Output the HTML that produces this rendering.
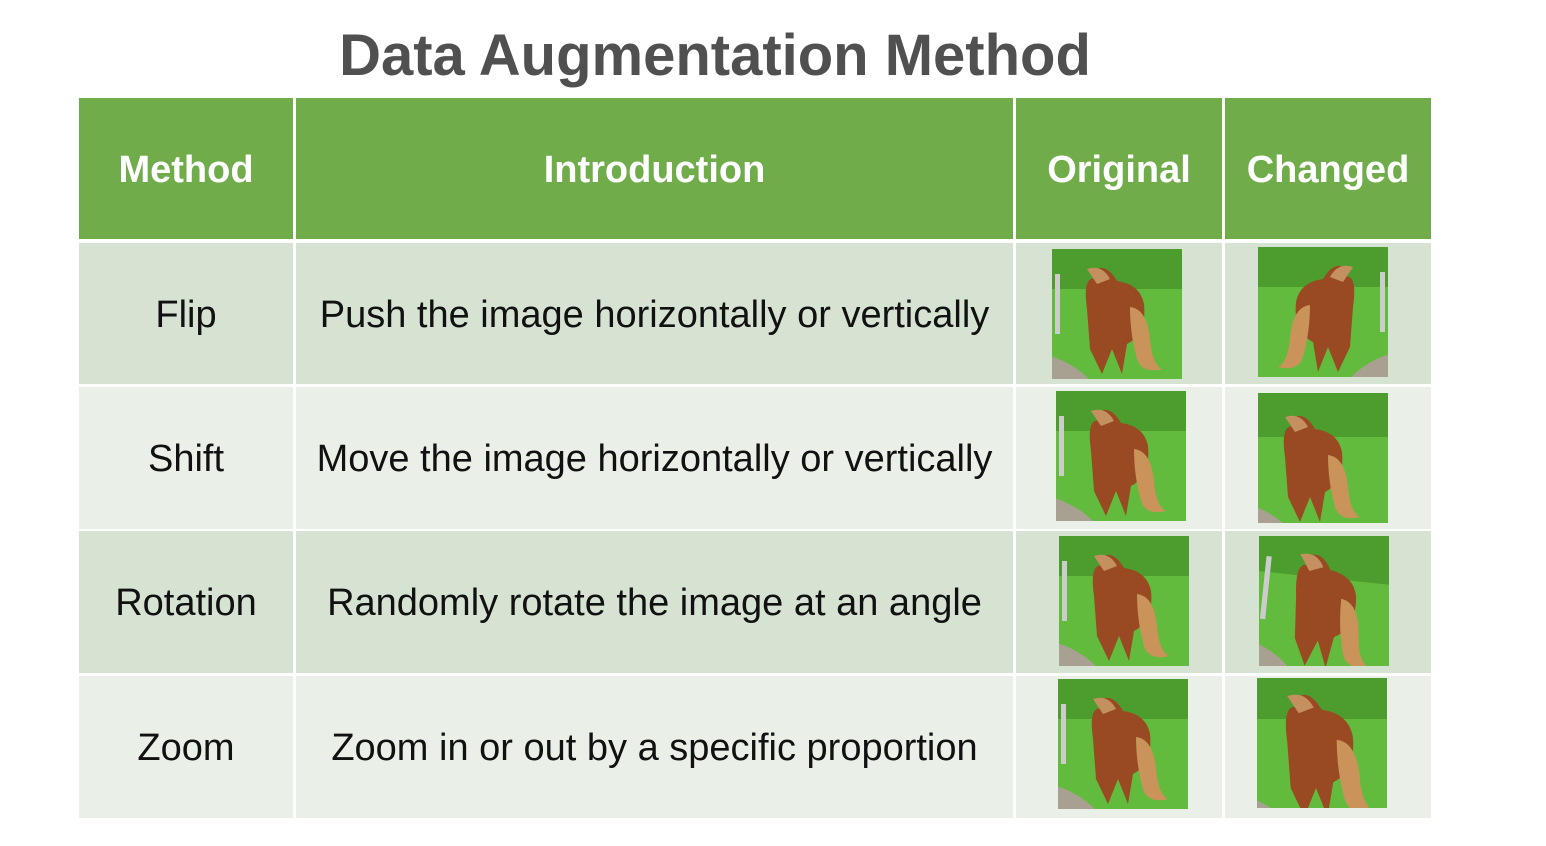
<!DOCTYPE html>
<html><head><style>
body{margin:0;width:1546px;height:846px;background:#fff;position:relative;overflow:hidden;font-family:"Liberation Sans",sans-serif}
.t{position:absolute;left:0;top:22px;width:1430px;text-align:center;font-size:58px;font-weight:bold;color:#505050}
.c{position:absolute;display:flex;align-items:center;justify-content:center;color:#111;font-size:38px;padding-top:3px;box-sizing:border-box}
.h{background:#71ac4b;color:#fff;font-weight:bold;font-size:38px;padding-top:4px}
.a{background:#d6e3d2}.b{background:#eaf0e8}
svg.i{position:absolute;width:130px;height:130px}
</style></head><body>
<svg width="0" height="0" style="position:absolute"><defs>
<g id="hz">
<rect x="-40" y="-40" width="210" height="210" fill="#62bb3c"/>
<rect x="-40" y="-40" width="210" height="80" fill="#4d9d2e"/>
<path d="M-40 100 Q40 105 60 170 L-40 170Z" fill="#a8a090"/>
<rect x="3" y="25" width="5" height="60" fill="#ccc"/>
<path d="M45 30 Q30 25 35 60 L38 100 L50 125 L60 100 L70 125 L75 95 Q95 85 92 55 Q88 35 65 32 Q55 15 45 20Z" fill="#9a4a22"/>
<path d="M78 58 Q95 60 98 90 Q100 115 110 120 Q90 125 85 110 Q78 85 78 58Z" fill="#c9935a"/>
<path d="M35 20 Q50 15 58 30 L45 35Z" fill="#c49060"/>
</g></defs></svg>
<div class="t">Data Augmentation Method</div>
<div class="c h" style="left:79px;top:98px;width:214px;height:141px">Method</div>
<div class="c h" style="left:296px;top:98px;width:717px;height:141px">Introduction</div>
<div class="c h" style="left:1016px;top:98px;width:206px;height:141px">Original</div>
<div class="c h" style="left:1225px;top:98px;width:206px;height:141px">Changed</div>

<div class="c a" style="left:79px;top:243px;width:214px;height:141px">Flip</div>
<div class="c a" style="left:296px;top:243px;width:717px;height:141px">Push the image horizontally or vertically</div>
<div class="c a" style="left:1016px;top:243px;width:206px;height:141px"></div>
<div class="c a" style="left:1225px;top:243px;width:206px;height:141px"></div>

<div class="c b" style="left:79px;top:387px;width:214px;height:142px">Shift</div>
<div class="c b" style="left:296px;top:387px;width:717px;height:142px">Move the image horizontally or vertically</div>
<div class="c b" style="left:1016px;top:387px;width:206px;height:142px"></div>
<div class="c b" style="left:1225px;top:387px;width:206px;height:142px"></div>

<div class="c a" style="left:79px;top:531px;width:214px;height:142px">Rotation</div>
<div class="c a" style="left:296px;top:531px;width:717px;height:142px">Randomly rotate the image at an angle</div>
<div class="c a" style="left:1016px;top:531px;width:206px;height:142px"></div>
<div class="c a" style="left:1225px;top:531px;width:206px;height:142px"></div>

<div class="c b" style="left:79px;top:676px;width:214px;height:142px">Zoom</div>
<div class="c b" style="left:296px;top:676px;width:717px;height:142px">Zoom in or out by a specific proportion</div>
<div class="c b" style="left:1016px;top:676px;width:206px;height:142px"></div>
<div class="c b" style="left:1225px;top:676px;width:206px;height:142px"></div>

<svg class="i" style="left:1052px;top:249px" viewBox="0 0 130 130"><use href="#hz"/></svg>
<svg class="i" style="left:1258px;top:247px" viewBox="0 0 130 130"><g transform="translate(130 0) scale(-1 1)"><use href="#hz"/></g></svg>
<svg class="i" style="left:1056px;top:391px" viewBox="0 0 130 130"><use href="#hz"/></svg>
<svg class="i" style="left:1258px;top:393px" viewBox="0 0 130 130"><g transform="translate(-8 4)"><use href="#hz"/></g></svg>
<svg class="i" style="left:1059px;top:536px" viewBox="0 0 130 130"><use href="#hz"/></svg>
<svg class="i" style="left:1259px;top:536px" viewBox="0 0 130 130"><g transform="rotate(6 65 65) scale(1.05)"><use href="#hz"/></g></svg>
<svg class="i" style="left:1058px;top:679px" viewBox="0 0 130 130"><use href="#hz"/></svg>
<svg class="i" style="left:1257px;top:678px" viewBox="0 0 130 130"><g transform="translate(-10 -5) scale(1.15)"><use href="#hz"/></g></svg>
</body></html>
